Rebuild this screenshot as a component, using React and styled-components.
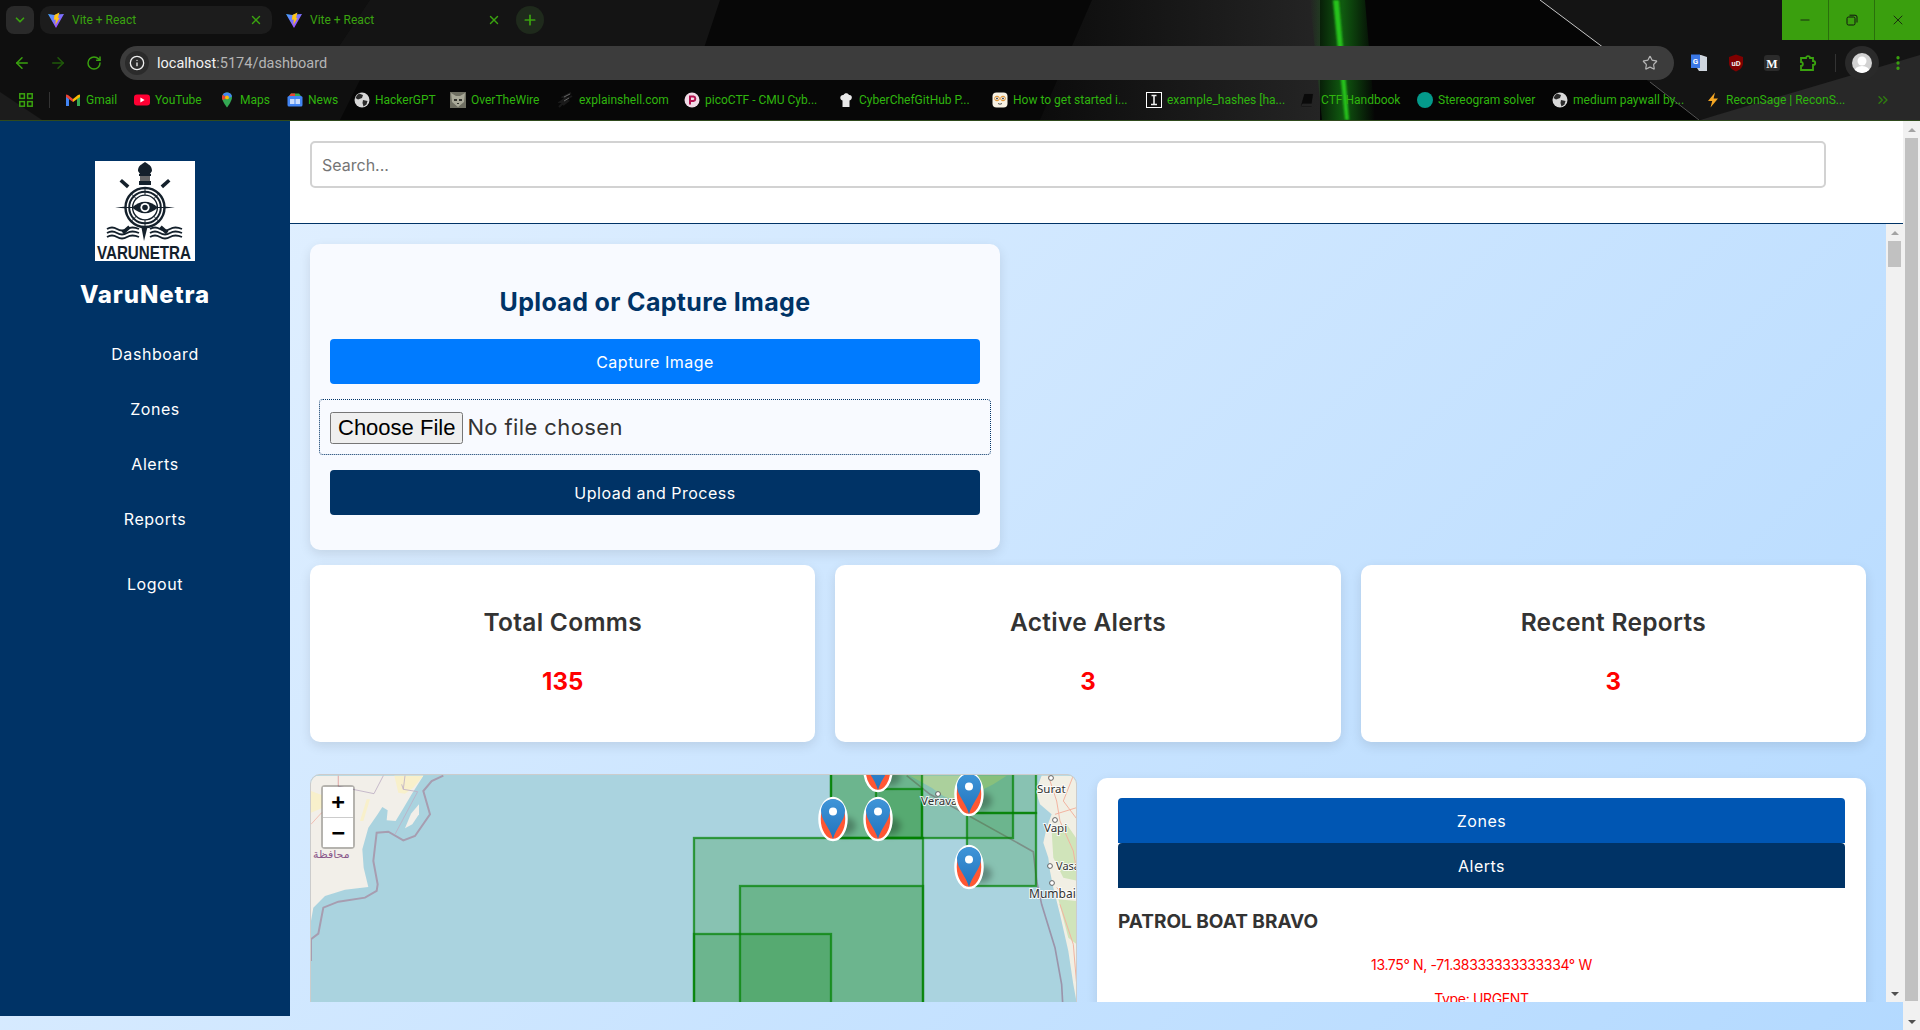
import React from 'react';
import styled, { createGlobalStyle } from 'styled-components';
import { ArrowLeft, ArrowRight, RotateCw, Star, Info, ChevronDown, ChevronsRight, X, Plus, Minus, MoreVertical } from 'lucide-react';

const GlobalStyle = createGlobalStyle`
  html, body {
    margin: 0;
    height: 100%;
    overflow: hidden;
    background: #0b0b0b;
  }
  * { box-sizing: border-box; }
`;

const chromeGreen = '#3aa30f';
const uiFont = `Inter, "Noto Sans", sans-serif`;

/* browser frame */
const Chrome = styled.header`
  position: relative;
  height: 121px;
  border-bottom: 1px solid #2f4a1d;
  background: #0b0b0b;
  font-family: Roboto, "Noto Sans", sans-serif;
  overflow: hidden;
`;
const ThemeArt = styled.svg`
  position: absolute;
  inset: 0;
`;
const ChromeRow = styled.div`
  position: relative;
  display: flex;
  align-items: center;
  height: ${(p) => p.$h}px;
`;
const TabSearch = styled.div`
  display: flex;
  align-items: center;
  justify-content: center;
  width: 28px;
  height: 28px;
  margin: 0 6px;
  border-radius: 8px;
  background: #2a2a2a;
  color: ${chromeGreen};
`;
const Tab = styled.div`
  display: flex;
  align-items: center;
  gap: 8px;
  width: 232px;
  height: 28px;
  margin-right: 6px;
  padding: 0 9px 0 8px;
  border-radius: 10px;
  background: ${(p) => (p.$active ? '#1c1c1c' : 'transparent')};
  color: ${chromeGreen};
  font-size: 12px;
`;
const TabTitle = styled.span`
  flex: 1;
`;
const NewTab = styled.div`
  display: flex;
  align-items: center;
  justify-content: center;
  width: 28px;
  height: 28px;
  border-radius: 50%;
  background: #1f2a1c;
  color: ${chromeGreen};
`;
const WindowControls = styled.div`
  display: flex;
  margin-left: auto;
  align-self: flex-start;
  height: 40px;
  background: #3a9f0e;
`;
const WindowButton = styled.div`
  display: flex;
  align-items: center;
  justify-content: center;
  width: 46px;
  color: #111;
  & + & { border-left: 1px solid #2a6f0c; }
`;
const ToolButton = styled.div`
  display: flex;
  align-items: center;
  justify-content: center;
  width: 36px;
  height: 34px;
  color: ${(p) => (p.$dim ? '#1f5a0a' : chromeGreen)};
`;
const ToolButtons = styled.div`
  display: flex;
  margin-left: 4px;
`;
const AddressBar = styled.div`
  display: flex;
  align-items: center;
  width: 1554px;
  height: 34px;
  margin: 0 8px;
  padding: 0 16px 0 5px;
  border-radius: 17px;
  background: #3c3c3c;
  font-size: 14.5px;
  color: #b5b5b5;
`;
const InfoPill = styled.div`
  display: flex;
  align-items: center;
  justify-content: center;
  width: 24px;
  height: 24px;
  margin-right: 8px;
  border-radius: 50%;
  background: #2b2b2b;
  color: #eee;
`;
const Host = styled.span`
  color: #f2f2f2;
`;
const StarSlot = styled.div`
  display: flex;
  margin-left: auto;
  color: #b5b5b5;
`;
const ToolSeparator = styled.div`
  width: 1px;
  height: 18px;
  margin: 0 9px;
  background: #333;
`;
const Avatar = styled.div`
  display: flex;
  align-items: center;
  justify-content: center;
  width: 34px;
  height: 34px;
  border-radius: 50%;
  background: #2a2a2a;
`;
const KebabSlot = styled.div`
  display: flex;
  justify-content: center;
  width: 24px;
  margin-left: 7px;
  color: ${chromeGreen};
`;
const AppsIcon = styled.svg`
  margin-left: 19px;
`;
const BarSeparator = styled.div`
  width: 1px;
  height: 16px;
  margin: 0 15px 0 16px;
  background: #333;
`;
const Bookmark = styled.div`
  display: flex;
  align-items: center;
  gap: 5px;
  flex: none;
  width: ${(p) => p.$w}px;
  color: #2fb50e;
  font-size: 12px;
  white-space: nowrap;
  svg { flex: none; }
`;
const BarMore = styled.div`
  display: flex;
  margin-left: auto;
  padding-right: 29px;
  color: #2f7d10;
`;

/* scrollbars, drawn as parts of the page */
const ScrollTrack = styled.div`
  display: flex;
  flex-direction: column;
  flex: none;
  width: 17px;
  background: #f1f1f1;
`;
const ScrollArrow = styled.div`
  display: flex;
  align-items: center;
  justify-content: center;
  flex: none;
  height: 17px;
  margin-top: ${(p) => (p.$down ? 'auto' : '0')};
  &::before {
    content: '';
    border-left: 4px solid transparent;
    border-right: 4px solid transparent;
    border-bottom: ${(p) => (p.$down ? '0' : '4px solid #a3a3a3')};
    border-top: ${(p) => (p.$down ? '4px solid #505050' : '0')};
  }
`;
const ScrollThumb = styled.div`
  flex: none;
  height: ${(p) => p.$h}px;
  margin: 0 2px;
  background: #c1c1c1;
`;

/* page */
const Viewport = styled.div`
  display: flex;
  height: 909px;
  background: linear-gradient(135deg, #e6f2ff, #b3d9ff);
  font-family: ${uiFont};
`;
const Page = styled.div`
  display: flex;
  align-items: flex-start;
  flex: 1;
  min-width: 0;
`;
const Sidebar = styled.aside`
  flex: none;
  width: 290px;
  height: 895px;
  padding-top: 40px;
  background: #003366;
  color: #fff;
`;
const LogoBox = styled.svg`
  display: block;
  width: 100px;
  height: 100px;
  margin: 0 auto;
  background: #fff;
`;
const Brand = styled.h1`
  margin: 17px 0 0;
  font-size: 24px;
  line-height: 34px;
  font-weight: 800;
  letter-spacing: 0.9px;
  text-align: center;
`;
const NavList = styled.ul`
  list-style: none;
  margin: 31px 0 0;
  padding: 0 0 0 20px;
`;
const NavItem = styled.li`
  height: 55px;
  margin-top: ${(p) => (p.$gapped ? '10px' : '0')};
  font-size: 16px;
  line-height: 22px;
  font-weight: 400;
  letter-spacing: 0.55px;
  text-align: center;
`;
const Main = styled.main`
  display: flex;
  flex-direction: column;
  flex: 1;
  min-width: 0;
  height: 881px;
`;
const SearchBar = styled.div`
  flex: none;
  height: 103px;
  padding: 20px 0 0 20px;
  background: #fff;
  border-bottom: 1px solid #003366;
`;
const SearchInput = styled.input`
  display: block;
  width: 1516px;
  height: 47px;
  padding: 0 10px;
  border: 2px solid #d2d2d2;
  border-radius: 5px;
  font-family: ${uiFont};
  font-size: 16px;
  outline: none;
  &::placeholder { color: #757575; }
`;
const ContentRow = styled.div`
  display: flex;
  flex: 1;
  min-height: 0;
`;
const Scroller = styled.div`
  flex: 1;
  min-width: 0;
  overflow: hidden;
  padding: 20px 20px 0;
`;
const UploadCard = styled.section`
  display: flex;
  flex-direction: column;
  gap: 15px;
  width: 690px;
  height: 306px;
  margin-bottom: 15px;
  padding: 42px 10px 0;
  border-radius: 10px;
  background: #f8faff;
  box-shadow: 0 4px 12px rgba(0, 0, 0, 0.1);
`;
const UploadTitle = styled.h2`
  margin: 0 0 6px;
  font-size: 25px;
  line-height: 32px;
  font-weight: 700;
  letter-spacing: 0.35px;
  text-align: center;
  color: #003366;
`;
const WideButton = styled.button`
  display: block;
  width: ${(p) => p.$w || '100%'};
  height: 45px;
  margin: ${(p) => p.$m || '0'};
  border: 0;
  border-radius: ${(p) => p.$r || '4px'};
  background: ${(p) => p.$bg};
  color: #fff;
  font-family: ${uiFont};
  font-size: 16px;
  font-weight: 400;
  letter-spacing: 0.5px;
`;
const FileInput = styled.input`
  display: block;
  width: 672px;
  height: 56px;
  margin-left: -1px;
  padding: 12px 10px;
  border: 1px dotted #003366;
  border-radius: 4px;
  color: #333;
  font-family: ${uiFont};
  font-size: 22px;
  letter-spacing: 0.4px;
  &::file-selector-button {
    font-family: "Liberation Sans", Arial, sans-serif;
    font-size: 22px;
    letter-spacing: 0;
  }
`;
const StatsRow = styled.div`
  display: grid;
  grid-template-columns: repeat(3, 1fr);
  gap: 20px;
  margin-bottom: 32px;
`;
const StatCard = styled.div`
  height: 177px;
  padding-top: 41px;
  border-radius: 10px;
  background: #fff;
  box-shadow: 0 4px 12px rgba(0, 0, 0, 0.1);
  text-align: center;
`;
const StatTitle = styled.h3`
  margin: 0;
  font-size: 24.5px;
  line-height: 32px;
  font-weight: 600;
  letter-spacing: 0.3px;
  color: #333;
`;
const StatValue = styled.div`
  margin-top: 28px;
  font-size: 24px;
  line-height: 32px;
  font-weight: 700;
  color: #ff0000;
`;
const BottomRow = styled.div`
  display: grid;
  grid-template-columns: 767px 769px;
  gap: 20px;
  align-items: start;
`;
const MapCard = styled.div`
  position: relative;
  height: 400px;
  overflow: hidden;
  border: 1px solid #ccc;
  border-radius: 10px;
  background: #aad3df;
`;
const MapArt = styled.svg`
  display: block;
`;
const ZoomControl = styled.div`
  position: absolute;
  top: 10px;
  left: 10px;
  width: 34px;
  border: 2px solid rgba(0, 0, 0, 0.25);
  border-radius: 4px;
  background-clip: padding-box;
`;
const ZoomButton = styled.div`
  height: 30px;
  background: #fff;
  color: #000;
  font-family: "DejaVu Sans Mono", "Liberation Mono", monospace;
  font-size: 22px;
  font-weight: 700;
  line-height: 30px;
  text-align: center;
  & + & { border-top: 1px solid #ccc; }
`;
const SidePanel = styled.div`
  margin-top: 4px;
  padding: 20px 21px;
  border-radius: 10px;
  background: #fff;
  box-shadow: 0 4px 12px rgba(0, 0, 0, 0.1);
`;
const AlertName = styled.h4`
  margin: 21px 0 0;
  font-size: 19px;
  line-height: 26px;
  font-weight: 700;
  color: #333;
`;
const AlertLine = styled.p`
  margin: ${(p) => p.$m};
  font-size: 14px;
  line-height: 20px;
  letter-spacing: -0.35px;
  text-align: center;
  color: #ff0000;
`;

const bookmarks = [
  { icon: 'gmail', label: 'Gmail', w: 69 },
  { icon: 'youtube', label: 'YouTube', w: 85 },
  { icon: 'maps', label: 'Maps', w: 68 },
  { icon: 'news', label: 'News', w: 67 },
  { icon: 'globe', label: 'HackerGPT', w: 96 },
  { icon: 'cat', label: 'OverTheWire', w: 108 },
  { icon: 'shell', label: 'explainshell.com', w: 126 },
  { icon: 'pico', label: 'picoCTF - CMU Cyb...', w: 154 },
  { icon: 'chef', label: 'CyberChefGitHub P...', w: 154 },
  { icon: 'face', label: 'How to get started i...', w: 154 },
  { icon: 'hash', label: 'example_hashes [ha...', w: 154 },
  { icon: 'book', label: 'CTF Handbook', w: 117 },
  { icon: 'teal', label: 'Stereogram solver', w: 135 },
  { icon: 'globe', label: 'medium paywall by...', w: 153 },
  { icon: 'bolt', label: 'ReconSage | ReconS...', w: 140 },
];

const stats = [
  { title: 'Total Comms', value: 135 },
  { title: 'Active Alerts', value: 3 },
  { title: 'Recent Reports', value: 3 },
];

const navLinks = ['Dashboard', 'Zones', 'Alerts', 'Reports'];

// full-page coordinates of the zones, shifted to map space below
const zones = [
  [694, 837, 229, 300],
  [740, 885, 183, 300],
  [694, 933, 137, 300],
  [831, 700, 182, 137],
  [831, 700, 91, 137],
  [876, 788, 46, 49],
  [967, 700, 69, 112],
  [967, 812, 69, 73],
];

const pins = [
  [522, 44],
  [567, 44],
  [567, -5],
  [658, 19],
  [658, 92],
];

const ViteIcon = () => (
  <svg width="16" height="16" viewBox="0 0 16 16">
    <defs>
      <linearGradient id="viteBody" x1="0" y1="0" x2="1" y2="1">
        <stop offset="0" stopColor="#41a6ff" />
        <stop offset="1" stopColor="#bd34fe" />
      </linearGradient>
    </defs>
    <path d="M0 2 L6.5 3 L8 2.6 L16 2 L8.3 15.6 Q8 16 7.7 15.6 Z" fill="url(#viteBody)" />
    <path d="M6.5 3 L11.4 0.4 L10 6 L11.6 5.8 L7.4 13 L7.8 7.6 L5.9 7.8 Z" fill="#ffc517" />
  </svg>
);

const Favicon = ({ kind }) => {
  switch (kind) {
    case 'gmail':
      return (
        <svg width="16" height="16" viewBox="0 0 16 16">
          <path d="M1 4 L1 14 L4 14 L4 7 Z" fill="#4285f4" />
          <path d="M15 4 L15 14 L12 14 L12 7 Z" fill="#34a853" />
          <path d="M1 2.5 L1 5 L8 10 L8 7 L3 3 Z" fill="#ea4335" />
          <path d="M15 2.5 L15 5 L8 10 L8 7 L13 3 Z" fill="#fbbc04" />
        </svg>
      );
    case 'youtube':
      return (
        <svg width="16" height="16" viewBox="0 0 16 16">
          <rect y="2.5" width="16" height="11" rx="3" fill="#ff0033" />
          <path d="M6.4 5.6 L10.6 8 L6.4 10.4 Z" fill="#fff" />
        </svg>
      );
    case 'maps':
      return (
        <svg width="16" height="16" viewBox="0 0 16 16">
          <path d="M8 0.5 C4.8 0.5 3 2.8 3 5.4 C3 9 8 15.5 8 15.5 C8 15.5 13 9 13 5.4 C13 2.8 11.2 0.5 8 0.5 Z" fill="#34a853" />
          <path d="M8 0.5 C6 0.5 4.6 1.4 3.8 2.7 L8 7 L13 4.4 C12.5 2.2 10.6 0.5 8 0.5 Z" fill="#4285f4" />
          <path d="M3.8 2.7 C3.2 3.5 3 4.5 3 5.4 C3 6.2 3.3 7.2 3.7 8.2 L8 5.4 Z" fill="#ea4335" />
          <circle cx="8" cy="5.4" r="1.9" fill="#fbbc04" />
        </svg>
      );
    case 'news':
      return (
        <svg width="16" height="16" viewBox="0 0 16 16">
          <path d="M2 4 L4 1.5 L12 1.5 L14 4 Z" fill="#34a853" />
          <path d="M4 1.5 L8 1.5 L8 4 L2 4 Z" fill="#ea4335" />
          <rect x="0.5" y="4" width="15" height="10.5" rx="1.5" fill="#4285f4" />
          <rect x="3" y="7" width="4.5" height="5" fill="#c9dcfb" />
          <rect x="8.5" y="7" width="4.5" height="5" fill="#c9dcfb" />
        </svg>
      );
    case 'globe':
      return (
        <svg width="16" height="16" viewBox="0 0 16 16">
          <circle cx="8" cy="8" r="7.5" fill="#d8d8d8" />
          <path d="M5 1.5 L9 3 L8 6 L4 7.5 L1.5 6 Q2.5 3 5 1.5 Z M9 8 L13.5 9 L12.5 12.5 L9.5 14.5 L8.5 11 Z" fill="#2b2b2b" />
        </svg>
      );
    case 'cat':
      return (
        <svg width="16" height="16" viewBox="0 0 16 16">
          <rect width="16" height="16" fill="#6f6f62" />
          <path d="M1 1 L6 4 L10 4 L15 1 L14 10 L8 15 L2 10 Z" fill="#a9a998" />
          <path d="M4 7 h3 v2 h-3 Z M9 7 h3 v2 h-3 Z M7 11 h2 v1 h-2 Z" fill="#33332e" />
        </svg>
      );
    case 'shell':
      return (
        <svg width="16" height="16" viewBox="0 0 16 16">
          <path d="M13 1 L5 5 L8 6 L2 10 L6 10 L1 15 M14 4 L7 8 L10 9 L5 13" fill="none" stroke="#1a1a1a" strokeWidth="2" />
          <path d="M12 2 L6 5 M11 6 L6 9" fill="none" stroke="#666" strokeWidth="1" />
        </svg>
      );
    case 'pico':
      return (
        <svg width="16" height="16" viewBox="0 0 16 16">
          <circle cx="8" cy="8" r="7.5" fill="#f0dbe6" />
          <path d="M6 12.5 V4.5 H9.5 A2.3 2.3 0 0 1 9.5 9 H6" fill="none" stroke="#b3134f" strokeWidth="2" />
        </svg>
      );
    case 'chef':
      return (
        <svg width="16" height="16" viewBox="0 0 16 16">
          <path d="M4.5 15 L4.5 8.5 C1 7.5 2 2.5 5.5 3 C6.5 0.5 10 0.5 11 3 C14.5 2.5 15 7.5 11.5 8.5 L11.5 15 Z" fill="#e8e8e8" />
        </svg>
      );
    case 'face':
      return (
        <svg width="16" height="16" viewBox="0 0 16 16">
          <rect x="0.5" y="0.5" width="15" height="15" rx="4" fill="#f7f1e3" />
          <circle cx="5" cy="6.5" r="2.3" fill="#fff" stroke="#e08a1e" strokeWidth="1" />
          <circle cx="11" cy="6.5" r="2.3" fill="#fff" stroke="#e08a1e" strokeWidth="1" />
          <circle cx="5" cy="6.5" r="0.9" fill="#333" />
          <circle cx="11" cy="6.5" r="0.9" fill="#333" />
          <path d="M6 11.5 Q8 13 10 11.5" fill="none" stroke="#555" strokeWidth="1" />
        </svg>
      );
    case 'hash':
      return (
        <svg width="16" height="16" viewBox="0 0 16 16">
          <rect x="0.5" y="0.5" width="15" height="15" fill="#111" stroke="#fff" />
          <path d="M5.5 3.5 H10.5 M8 3.5 V12.5 M5 12.5 H11" stroke="#eee" strokeWidth="1.6" fill="none" />
        </svg>
      );
    case 'book':
      return (
        <svg width="16" height="16" viewBox="0 0 16 16">
          <path d="M4 1.5 H13.5 L12 12 H3 Q1.5 12 2 14 H12 L11.8 15 H2 Q0.5 15 1 12 Z" fill="#0a0a0a" stroke="#2a2a2a" strokeWidth="0.6" />
        </svg>
      );
    case 'teal':
      return (
        <svg width="16" height="16" viewBox="0 0 16 16">
          <circle cx="8" cy="8" r="8" fill="#049a8b" />
        </svg>
      );
    default:
      return (
        <svg width="16" height="16" viewBox="0 0 16 16">
          <path d="M10 0.5 L3 9 L7.2 9 L5.5 15.5 L13 6.5 L8.6 6.5 Z" fill="#f5a623" />
        </svg>
      );
  }
};

const Pin = ({ x, y }) => (
  <g transform={`translate(${x} ${y})`}>
    <ellipse cx="12" cy="7" rx="11" ry="9" fill="rgba(0,0,0,0.28)" filter="url(#pinShadow)" />
    <ellipse rx="13.5" ry="21" fill="#ff5733" stroke="#fff" strokeWidth="2.5" />
    <path d="M0 20 C-3 9 -12 1 -12 -8 A12 12 0 1 1 12 -8 C12 1 3 9 0 20 Z" fill="url(#pinBlue)" />
    <circle cy="-7.5" r="4" fill="#fff" />
  </g>
);

const MapLabel = ({ x, y, size = 11.5, children }) => (
  <text
    x={x}
    y={y}
    fontFamily='"Noto Sans", sans-serif'
    fontSize={size}
    fill="#333"
    stroke="rgba(255,255,255,0.85)"
    strokeWidth="2"
    paintOrder="stroke"
  >
    {children}
  </text>
);

const Town = ({ x, y }) => <circle cx={x} cy={y} r="2.4" fill="#fff" stroke="#555" strokeWidth="0.9" />;

const ZoneMap = () => (
  <MapArt width="765" height="398" viewBox="0 0 765 398">
    <defs>
      <linearGradient id="pinBlue" x1="0" y1="0" x2="0" y2="1">
        <stop offset="0" stopColor="#3f95d8" />
        <stop offset="1" stopColor="#2273bd" />
      </linearGradient>
      <filter id="pinShadow" x="-50%" y="-50%" width="200%" height="200%">
        <feGaussianBlur stdDeviation="3" />
      </filter>
    </defs>
    <rect width="765" height="398" fill="#aad3df" />

    <g transform="translate(-6 -4) scale(0.3333)" fill="none">
      <path d="M18 14 L355 14 L320 70 L296 110 L272 150 L245 148 L248 118 L232 108 L218 130 L190 170 L172 235 L176 290 L190 348 L120 356 L60 375 L25 410 L18 450 Z" fill="#f2efe9" />
      <path d="M268 14 L355 14 L325 50 L300 68 L280 65 Z M18 60 L50 72 L50 112 L18 125 Z M165 150 L185 85 L195 85 L175 150 Z" fill="#f8f0cb" />
      <path d="M300 172 L318 128 L342 100 L342 130 L322 160 Z" fill="#f2efe9" />
      <path d="M18 570 L18 505 L40 488 L55 410 L100 392 L180 380 L215 360 L218 340 L205 270 L215 185 L250 182 L295 208 L330 195 L375 130 L355 60 L380 30 L415 14" stroke="#a79db0" strokeWidth="6" />
      <path d="M270 190 L338 62 L295 55 L300 14 M295 55 L290 40 M100 14 L100 46 L207 68 L235 14" stroke="#bdaec4" strokeWidth="2.5" />
      <path d="M100 14 L100 46 M50 125 L18 160" stroke="#f0b4a8" strokeWidth="2.5" />
    </g>

    <g transform="translate(549 -4) scale(0.3333)" fill="none">
      <path d="M150 14 L215 50 L250 75 L300 95 L340 70 L400 40 L440 14 Z" fill="#d6e4c4" />
      <path d="M545 14 L535 40 L528 62 L540 100 L575 130 L560 170 L550 215 L565 260 L570 300 L580 350 L600 430 L625 540 L640 640 L650 695 L670 695 L670 14 Z" fill="#f1efe4" />
      <path d="M575 180 L620 160 L655 210 L655 330 L610 320 L580 260 Z M595 385 L650 390 L650 520 L625 500 Z" fill="#d0e4ba" />
      <path d="M565 14 L590 90 L600 150 L640 240 L650 300 M640 14 L610 90 L655 150 M590 350 L625 380 L655 370 M600 400 L640 520 L650 640 M585 130 L650 110" stroke="#f2b3a0" strokeWidth="3" />
      <path d="M140 14 L210 70 L520 242 L530 330 L545 400 L585 530 L605 640 L608 695" stroke="#9b94aa" strokeWidth="5" />
    </g>

    {zones.map(([x, y, w, h], i) => (
      <rect
        key={i}
        x={x - 311}
        y={y - 774}
        width={w}
        height={h}
        fill="green"
        fillOpacity="0.2"
        stroke="green"
        strokeOpacity="0.7"
        strokeWidth="2.3"
      />
    ))}

    <Town x="627" y="19" />
    <Town x="740" y="3" />
    <Town x="744" y="45" />
    <Town x="739" y="91" />
    <Town x="741" y="108" />
    <MapLabel x="610" y="30">Veraval</MapLabel>
    <MapLabel x="726" y="18">Surat</MapLabel>
    <MapLabel x="733" y="57">Vapi</MapLabel>
    <MapLabel x="745" y="95" size={11}>Vasa</MapLabel>
    <MapLabel x="718" y="123" size={12}>Mumbai</MapLabel>
    <text x="2" y="83" fontFamily='"DejaVu Sans", sans-serif' fontSize="11" fill="#8b5a8c">محافظة</text>

    {pins.map(([x, y]) => (
      <Pin key={`${x}-${y}`} x={x} y={y} />
    ))}
  </MapArt>
);

const Logo = () => (
  <LogoBox viewBox="0 0 100 100">
    <g fill="#14202b">
      <path d="M43 10 C43 5 46 4 47 3 L50 1 L53 3 C54 4 57 5 57 10 L55 13 L45 13 Z" />
      <rect x="44" y="13" width="12" height="2" />
      <rect x="45" y="15" width="10" height="5" fill="#666" />
      <rect x="44" y="20" width="12" height="4" />
      <path d="M50 44 L20 46.5 L50 49 Z M50 44 L80 46.5 L50 49 Z" />
      <path d="M46 64 L49 80 L53 64 Z" />
      <rect x="25" y="21" width="10" height="3.6" transform="rotate(42 30 22)" />
      <rect x="65" y="21" width="10" height="3.6" transform="rotate(-42 70 22)" />
      <rect x="26" y="67" width="9" height="3.6" transform="rotate(-42 31 68)" />
      <rect x="65" y="67" width="9" height="3.6" transform="rotate(42 69 68)" />
    </g>
    <circle cx="50" cy="46.5" r="19.5" fill="#fff" stroke="#14202b" strokeWidth="2.4" />
    <circle cx="50" cy="46.5" r="15.8" fill="none" stroke="#14202b" strokeWidth="2" />
    <path d="M50 27 V66 M30.5 46.5 H69.5 M36 32.5 L64 60.5 M64 32.5 L36 60.5" stroke="#14202b" strokeWidth="1" />
    <circle cx="50" cy="46.5" r="12.4" fill="#fff" stroke="#14202b" strokeWidth="1.4" />
    <path d="M37 46.5 Q50 35 63 46.5 Q50 58 37 46.5 Z" fill="#14202b" />
    <circle cx="50" cy="46.5" r="4.6" fill="#fff" />
    <circle cx="50" cy="46.5" r="2.8" fill="#14202b" />
    <path
      d="M12 68 q5 -3 10 0 t10 0 t12 0 M12 72 q5 -3 10 0 t10 0 t12 0 M12 76 q5 -3 10 0 t10 0 t12 0 M55 68 q5 -3 10 0 t10 0 t12 0 M55 72 q5 -3 10 0 t10 0 t12 0 M55 76 q5 -3 10 0 t10 0 t12 0"
      fill="none"
      stroke="#14202b"
      strokeWidth="1.9"
    />
    <text x="2" y="98" fontFamily='"Liberation Sans", sans-serif' fontWeight="700" fontSize="19" fill="#14202b" textLength="94" lengthAdjust="spacingAndGlyphs">VARUNETRA</text>
  </LogoBox>
);

const BrowserFrame = () => (
  <Chrome>
    <ThemeArt width="1920" height="120" viewBox="0 0 1920 120">
      <defs>
        <linearGradient id="greyRamp" x1="0" y1="0" x2="1" y2="0">
          <stop offset="0" stopColor="#0c0c0c" />
          <stop offset="1" stopColor="#242424" />
        </linearGradient>
        <linearGradient id="streakGlow" x1="0" y1="0" x2="1" y2="0">
          <stop offset="0" stopColor="#18a018" stopOpacity="0" />
          <stop offset="0.5" stopColor="#18a018" stopOpacity="0.55" />
          <stop offset="1" stopColor="#18a018" stopOpacity="0" />
        </linearGradient>
        <filter id="softBlur"><feGaussianBlur stdDeviation="1" /></filter>
      </defs>
      <rect width="1920" height="120" fill="#070707" />
      <path d="M0 0 H400 L340 120 H0 Z" fill="#0f0f0f" />
      <path d="M370 0 H720 L700 60 H330 Z" fill="#141414" />
      <path d="M0 92 L42 120 H0 Z" fill="#1c1c1c" />
      <path d="M1092 0 H1320 V120 H1040 Z" fill="url(#greyRamp)" />
      <path d="M1320 0 H1540 L1699 120 H1320 Z" fill="#050505" />
      <path d="M1540 0 H1920 V60 L1700 120 Z" fill="#141414" />
      <path d="M1700 120 L1920 55 V120 Z" fill="#282828" />
      <path d="M1310 0 H1365 L1375 120 H1322 Z" fill="url(#streakGlow)" />
      <path d="M1333 0 H1339 L1349 120 H1345 Z" fill="#25c21c" filter="url(#softBlur)" />
      <path d="M1540 0 L1604 48" stroke="#c8c8c8" strokeWidth="1" />
      <path d="M1650 82 L1699 120" stroke="#555" strokeWidth="1" />
    </ThemeArt>

    <ChromeRow $h={40}>
      <TabSearch><ChevronDown size={14} strokeWidth={3} /></TabSearch>
      <Tab $active>
        <ViteIcon />
        <TabTitle>Vite + React</TabTitle>
        <X size={14} strokeWidth={2.4} />
      </Tab>
      <Tab>
        <ViteIcon />
        <TabTitle>Vite + React</TabTitle>
        <X size={14} strokeWidth={2.4} />
      </Tab>
      <NewTab><Plus size={16} strokeWidth={2.6} /></NewTab>
      <WindowControls>
        <WindowButton><Minus size={14} strokeWidth={1.4} /></WindowButton>
        <WindowButton>
          <svg width="12" height="12" viewBox="0 0 12 12" fill="none" stroke="#111" strokeWidth="1">
            <rect x="1" y="3" width="8" height="8" rx="1.5" />
            <path d="M3.5 1.2 H9 Q11 1.2 11 3 V8.5" />
          </svg>
        </WindowButton>
        <WindowButton><X size={16} strokeWidth={1.2} /></WindowButton>
      </WindowControls>
    </ChromeRow>

    <ChromeRow $h={46}>
      <ToolButtons>
        <ToolButton><ArrowLeft size={18} /></ToolButton>
        <ToolButton $dim><ArrowRight size={18} /></ToolButton>
        <ToolButton><RotateCw size={16} strokeWidth={2.2} /></ToolButton>
      </ToolButtons>
      <AddressBar>
        <InfoPill><Info size={16} /></InfoPill>
        <Host>localhost</Host>:5174/dashboard
        <StarSlot><Star size={16} strokeWidth={1.8} /></StarSlot>
      </AddressBar>
      <ToolButton>
        <svg width="18" height="18" viewBox="0 0 18 18">
          <path d="M0 1 H10 L16 3 V17 L8 17 L6 14 H0 Z" fill="#cfd6de" />
          <path d="M0 0.5 H9 V14 H0 Z" fill="#3b78e7" />
          <text x="1.7" y="9.5" fontFamily="Roboto, sans-serif" fontSize="8" fontWeight="700" fill="#fff">G</text>
        </svg>
      </ToolButton>
      <ToolButton>
        <svg width="16" height="18" viewBox="0 0 16 18">
          <path d="M8 0.5 L15 3 V9 C15 13 12 16 8 17.5 C4 16 1 13 1 9 V3 Z" fill="#800000" />
          <text x="8" y="11.5" fontFamily="Roboto, sans-serif" fontSize="7.5" fontWeight="700" fill="#eee" textAnchor="middle">uD</text>
        </svg>
      </ToolButton>
      <ToolButton>
        <svg width="16" height="16" viewBox="0 0 16 16">
          <rect width="16" height="16" rx="3" fill="#2b2b2b" />
          <text x="8" y="12.5" fontFamily='"Liberation Serif", serif' fontSize="12" fontWeight="700" fill="#fff" textAnchor="middle">M</text>
        </svg>
      </ToolButton>
      <ToolButton>
        <svg width="18" height="18" viewBox="0 0 18 18" fill="none" stroke={chromeGreen} strokeWidth="1.8">
          <path d="M2 4 H7 C7 1.5 11 1.5 11 4 H14 V7 C17 7 17 11 14 11 V16 H2 V12 C4.5 12 4.5 8 2 8 Z" />
        </svg>
      </ToolButton>
      <ToolSeparator />
      <Avatar>
        <svg width="20" height="20" viewBox="0 0 20 20">
          <defs><clipPath id="faceClip"><circle cx="10" cy="10" r="10" /></clipPath></defs>
          <circle cx="10" cy="10" r="10" fill="#d2d2d2" />
          <g clipPath="url(#faceClip)" fill="#fff">
            <circle cx="10" cy="8" r="4.5" />
            <ellipse cx="10" cy="19" rx="8" ry="6" />
          </g>
        </svg>
      </Avatar>
      <KebabSlot><MoreVertical size={18} strokeWidth={2.4} /></KebabSlot>
    </ChromeRow>

    <ChromeRow $h={28}>
      <AppsIcon width="14" height="14" viewBox="0 0 14 14" fill="none" stroke={chromeGreen} strokeWidth="1.5">
        <rect x="0.8" y="0.8" width="4.6" height="4.6" />
        <rect x="8.6" y="0.8" width="4.6" height="4.6" />
        <rect x="0.8" y="8.6" width="4.6" height="4.6" />
        <rect x="8.6" y="8.6" width="4.6" height="4.6" />
      </AppsIcon>
      <BarSeparator />
      {bookmarks.map((b) => (
        <Bookmark key={b.label} $w={b.w}>
          <Favicon kind={b.icon} />
          {b.label}
        </Bookmark>
      ))}
      <BarMore><ChevronsRight size={16} strokeWidth={2} /></BarMore>
    </ChromeRow>
  </Chrome>
);

const Scrollbar = ({ thumb }) => (
  <ScrollTrack>
    <ScrollArrow />
    <ScrollThumb $h={thumb} />
    <ScrollArrow $down />
  </ScrollTrack>
);

const App = () => {
  return (
    <>
      <GlobalStyle />
      <BrowserFrame />
      <Viewport>
        <Page>
          <Sidebar>
            <Logo />
            <Brand>VaruNetra</Brand>
            <NavList>
              {navLinks.map((link) => (
                <NavItem key={link}>{link}</NavItem>
              ))}
              <NavItem $gapped>Logout</NavItem>
            </NavList>
          </Sidebar>
          <Main>
            <SearchBar>
              <SearchInput type="text" placeholder="Search..." />
            </SearchBar>
            <ContentRow>
              <Scroller>
                <UploadCard>
                  <UploadTitle>Upload or Capture Image</UploadTitle>
                  <WideButton $w="650px" $m="0 10px" $bg="#007bff">Capture Image</WideButton>
                  <FileInput type="file" />
                  <WideButton $w="650px" $m="0 10px" $bg="#003366">Upload and Process</WideButton>
                </UploadCard>
                <StatsRow>
                  {stats.map((s) => (
                    <StatCard key={s.title}>
                      <StatTitle>{s.title}</StatTitle>
                      <StatValue>{s.value}</StatValue>
                    </StatCard>
                  ))}
                </StatsRow>
                <BottomRow>
                  <MapCard>
                    <ZoneMap />
                    <ZoomControl>
                      <ZoomButton>+</ZoomButton>
                      <ZoomButton>−</ZoomButton>
                    </ZoomControl>
                  </MapCard>
                  <SidePanel>
                    <WideButton $bg="#0056b3" $r="4px 4px 0 0">Zones</WideButton>
                    <WideButton $bg="#003366" $r="4px 4px 0 0">Alerts</WideButton>
                    <AlertName>PATROL BOAT BRAVO</AlertName>
                    <AlertLine $m="20px 0 0">13.75° N, -71.38333333333334° W</AlertLine>
                    <AlertLine $m="14px 0 0">Type: URGENT</AlertLine>
                  </SidePanel>
                </BottomRow>
              </Scroller>
              <Scrollbar thumb={26} />
            </ContentRow>
          </Main>
        </Page>
        <Scrollbar thumb={863} />
      </Viewport>
    </>
  );
};

export default App;
